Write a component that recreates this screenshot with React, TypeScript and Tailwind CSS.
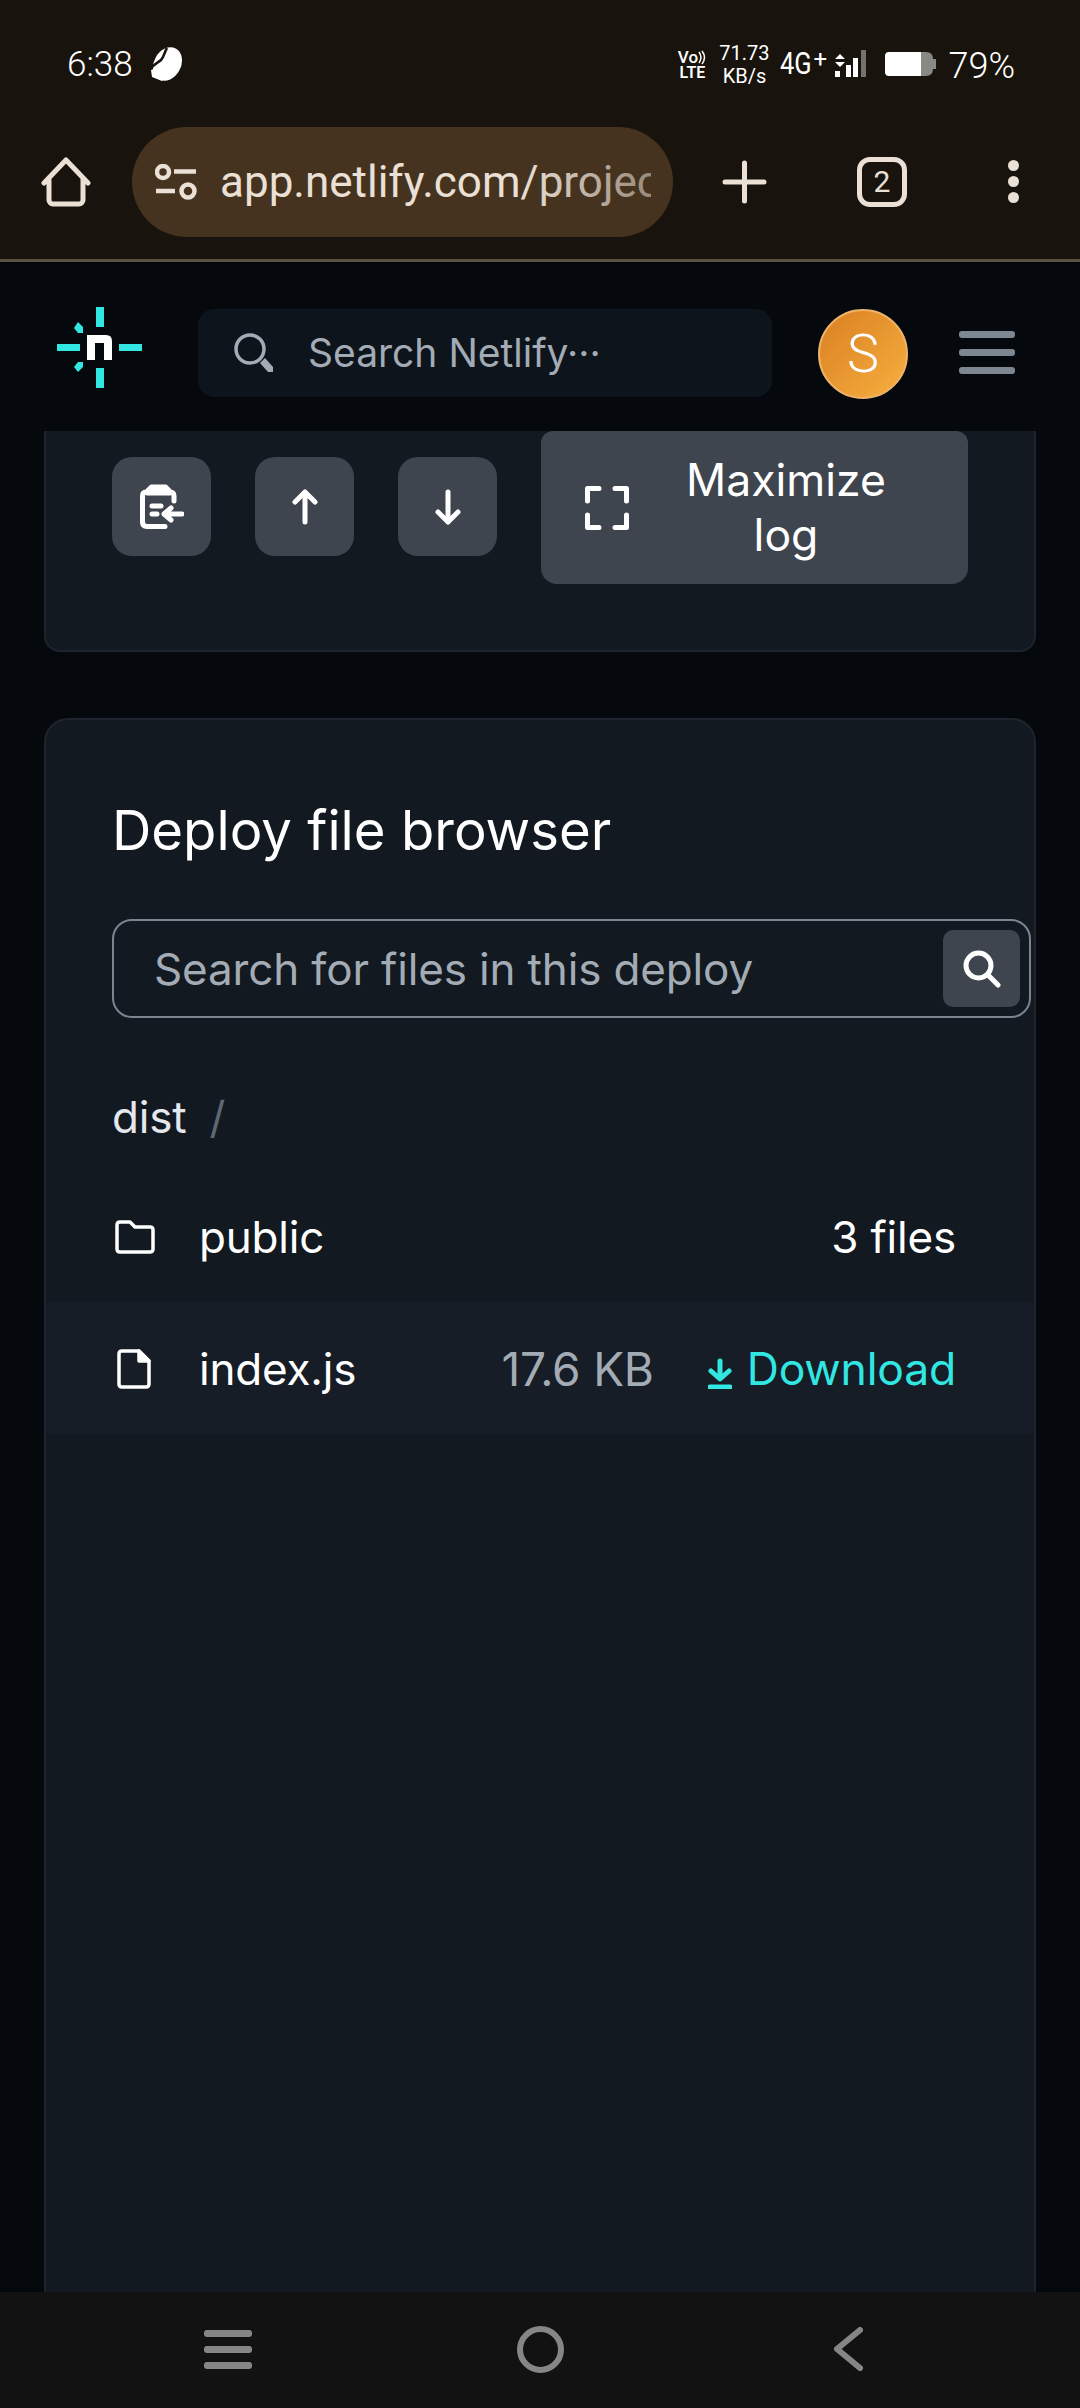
import React from "react";

const inter = { fontFamily: "Inter, 'Liberation Sans', sans-serif" };

function HomeIcon() {
  return (
    <svg width="50" height="50" viewBox="0 0 50 50" fill="none" stroke="#eae0d6" strokeWidth="5" strokeLinejoin="round" strokeLinecap="round">
      <path d="M3 26 L25 3 L47 26 M8 22 V43 a4 4 0 0 0 4 4 H38 a4 4 0 0 0 4 -4 V22" />
    </svg>
  );
}

function BeanIcon() {
  return (
    <svg width="34" height="34" viewBox="0 0 34 34" fill="none">
      <ellipse cx="17.5" cy="17" rx="13.5" ry="17.5" transform="rotate(28 17.5 17)" fill="#fff" />
      <path d="M17 1 C14 6 14 10 11 13 C8 16 3 17 0 23" stroke="#18130d" strokeWidth="2.5" />
      <path d="M10 6 C11 8 10 11 7 13 C5 14 3 16 2 18 Z" fill="#fff" />
      <path d="M1 23 C7 21 13 17 16 11 C17 9 18 6 19 4 L24 6 L12 34 L2 30 Z" fill="#fff" />
    </svg>
  );
}

function Logo() {
  return (
    <svg width="86" height="82" viewBox="0 0 86 82" className="shrink-0">
      <g fill="#32e6e2">
        <rect x="39" y="0" width="8" height="20" />
        <rect x="39" y="61" width="8" height="20" />
        <rect x="0" y="37" width="23" height="7" />
        <rect x="62" y="37" width="23" height="7" />
        <path d="M21 15 L26 20 V26 H21 L17 21 Z" />
        <path d="M21 66 L26 61 V56 H21 L17 61 Z" transform="translate(0 -1)" />
      </g>
      <path d="M30 53 V28 H49 Q55 28 55 34 V53 H47 V36 H38 V53 Z" fill="#fff" />
    </svg>
  );
}

function SearchNetlifyIcon() {
  return (
    <svg width="40" height="40" viewBox="0 0 40 40" fill="none" className="shrink-0">
      <circle cx="16" cy="16" r="14" stroke="#a3abb5" strokeWidth="3.5" />
      <path d="M26 30 L31 25 L39 34 V39 H34 Z" fill="#a3abb5" />
    </svg>
  );
}

function ClipboardIcon() {
  return (
    <svg width="44" height="45" viewBox="0 0 44 45" fill="none" stroke="#fff" strokeLinecap="round" strokeLinejoin="round">
      <path d="M11 2 H26 L30 6 V10 H7 V6 Z" fill="#fff" strokeWidth="3" />
      <path d="M6 8 Q2.5 8 2.5 12 V38 Q2.5 42.5 7 42.5 H25" strokeWidth="5" />
      <path d="M29 8 H30 Q34 8 34 12 V17" strokeWidth="5" />
      <path d="M12 22 H21 M12 30 H17" strokeWidth="5" />
      <path d="M24 30 H42 M31 24 L24 30 L31 36" strokeWidth="5" />
    </svg>
  );
}

function ArrowIcon({ down }: { down?: boolean }) {
  return (
    <svg width="26" height="36" viewBox="0 0 26 36" fill="none" stroke="#fff" strokeWidth="5" strokeLinecap="round" strokeLinejoin="round">
      {down ? <path d="M13 3 V33 M3 23 L13 33 L23 23" /> : <path d="M13 33 V3 M3 13 L13 3 L23 13" />}
    </svg>
  );
}

function ExpandIcon() {
  return (
    <svg width="44" height="44" viewBox="0 0 44 44" fill="none" stroke="#fff" strokeWidth="5" strokeLinecap="round" strokeLinejoin="round" className="shrink-0">
      <path d="M2.5 15 V2.5 H14 M30 2.5 H41.5 V15 M41.5 29 V41.5 H30 M14 41.5 H2.5 V29" />
    </svg>
  );
}

function ActionButton({ children }: { children: React.ReactNode }) {
  return <div className="w-[99px] h-[99px] rounded-[20px] bg-[#3e454e] flex items-center justify-center shrink-0">{children}</div>;
}

export default function App() {
  return (
    <div className="w-[1080px] h-[2408px] flex flex-col overflow-hidden bg-[#05090d]" style={inter}>
      {/* status bar */}
      <div className="h-[127px] shrink-0 bg-[#18130d] flex items-center justify-between pl-[67px] pr-[65px] text-white" style={{ fontFamily: "Roboto, sans-serif" }}>
        <div className="flex items-center gap-[17px]">
          <span className="text-[35px] leading-none font-light mt-[2px]">6:38</span>
          <BeanIcon />
        </div>
        <div className="flex items-center">
          <div className="w-[28px] flex flex-col items-center leading-none font-bold text-[15px] mr-[14px] mt-[2px]">
            <div className="flex items-center">
              <span className="text-[17px] leading-[15px] font-medium">Vo</span>
              <svg width="9" height="15" viewBox="0 0 9 15" fill="none" stroke="#fff" strokeWidth="1.5"><path d="M1 2 Q5 7.5 1 13 M4 1 Q9 7.5 4 14" /></svg>
            </div>
            <span className="text-[16px] leading-[14px] mt-[1px] font-semibold">LTE</span>
          </div>
          <div className="w-[48px] flex flex-col items-center text-[20px] leading-[23px] mr-[12px] mt-[2px]">
            <span>71.73</span>
            <span>KB/s</span>
          </div>
          <span className="text-[31px] leading-none scale-x-[0.82] origin-left w-[33px]">4G</span>
          <span className="text-[24px] leading-none -mt-[10px] w-[21px]">+</span>
          <svg width="33" height="28" viewBox="0 0 33 28" className="mr-[17px]">
            <path d="M1 9 L6 4 L11 9 Z M1 12 L11 12 L6 17 Z M1 21 H6 V27 H1 Z M12 15 H17 V27 H12 Z M19 8 H24 V27 H19 Z" fill="#fff" />
            <rect x="27" y="0" width="5" height="27" fill="#75716d" />
          </svg>
          <svg width="52" height="26" viewBox="0 0 52 26" className="mr-[12px]">
            <path d="M42 1 Q49 1 49 8 V18 Q49 25 42 25 H37 V1 Z" fill="#8a8885" />
            <rect x="49" y="8" width="3" height="10" fill="#8a8885" />
            <path d="M5 1 H37 V25 H5 Q1 25 1 21 V5 Q1 1 5 1 Z" fill="#fff" />
          </svg>
          <span className="text-[36px] leading-none font-light mt-[5px]">79%</span>
        </div>
      </div>

      {/* browser toolbar */}
      <div className="h-[132px] shrink-0 bg-[#18130d] flex items-start pl-[41px]">
        <div className="mt-[30px] mr-[41px]"><HomeIcon /></div>
        <div className="w-[541px] h-[110px] rounded-full bg-[#46331f] flex items-center pl-[23px] pr-[22px]">
          <svg width="42" height="36" viewBox="0 0 42 36" fill="none" stroke="#eae0d6" strokeWidth="4.5" className="shrink-0 mr-[23px]">
            <circle cx="8" cy="8" r="6" />
            <path d="M19 7.5 H41 M1 27 H20" />
            <circle cx="33" cy="27" r="6.5" />
          </svg>
          <div className="relative flex-1 min-w-0 overflow-hidden">
            <div className="text-[44px] leading-[60px] text-[#eae0d6] whitespace-nowrap" style={{ fontFamily: "Roboto, sans-serif" }}>app.netlify.com/projects/</div>
            <div className="absolute top-0 right-0 h-full w-[130px] bg-gradient-to-r from-[#46331f00] to-[#46331f80]" />
          </div>
        </div>
        <div className="mt-[33px] ml-[49px]">
          <svg width="45" height="44" viewBox="0 0 45 44" fill="none" stroke="#eae0d6" strokeWidth="5" strokeLinecap="round"><path d="M22.5 3 V41 M3 22 H42" /></svg>
        </div>
        <div className="mt-[30px] ml-[90px] w-[50px] h-[50px] rounded-[13px] border-[5px] border-[#eae0d6] flex items-center justify-center text-[30px] leading-none text-[#eae0d6]" style={{ fontFamily: "Roboto, sans-serif" }}>2</div>
        <div className="mt-[33px] ml-[101px] flex flex-col gap-[5px]">
          <div className="w-[11px] h-[11px] rounded-full bg-[#eae0d6]" />
          <div className="w-[11px] h-[11px] rounded-full bg-[#eae0d6]" />
          <div className="w-[11px] h-[11px] rounded-full bg-[#eae0d6]" />
        </div>
      </div>
      <div className="h-[3px] shrink-0 bg-[#5b5043]" />

      {/* Netlify header */}
      <div className="h-[169px] shrink-0 flex items-start pt-[47px] pl-[57px]">
        <div className="-mt-[2px]"><Logo /></div>
        <div className="ml-[55px] w-[574px] h-[88px] rounded-[16px] bg-[#0e141b] flex items-center pl-[36px]">
          <SearchNetlifyIcon />
          <span className="ml-[34px] -mt-[2px] text-[39px] leading-none text-[#a3abb5] whitespace-nowrap">Search Netlify···</span>
        </div>
        <div className="ml-[46px] w-[90px] h-[90px] rounded-full border-2 border-[#eeb268] bg-gradient-to-br from-[#da7f22] to-[#f6b03e] flex items-center justify-center text-white text-[54px] leading-none font-light" style={{ fontFamily: "Roboto, sans-serif" }}>S</div>
        <div className="ml-[51px] mt-[22px] flex flex-col gap-[11px]">
          <div className="w-[56px] h-[7px] rounded-[3px] bg-[#7d8791]" />
          <div className="w-[56px] h-[7px] rounded-[3px] bg-[#7d8791]" />
          <div className="w-[56px] h-[7px] rounded-[3px] bg-[#7d8791]" />
        </div>
      </div>

      {/* content */}
      <div className="flex-1 min-h-0 overflow-hidden px-[44px] flex flex-col">
        <div className="shrink-0 h-[221px] bg-[#121920] border-x-2 border-b-2 border-[#1d242d] rounded-b-[16px] pl-[66px] flex items-start gap-[44px]">
          <div className="mt-[26px]"><ActionButton><ClipboardIcon /></ActionButton></div>
          <div className="mt-[26px]"><ActionButton><ArrowIcon /></ActionButton></div>
          <div className="mt-[26px]"><ActionButton><ArrowIcon down /></ActionButton></div>
          <div className="w-[427px] h-[153px] rounded-b-[16px] rounded-t-[12px] bg-[#3e454e] flex items-center pl-[44px] shrink-0 text-white text-[44.5px] leading-[55px]">
            <ExpandIcon />
            <div className="ml-[27px] w-[260px] text-center">Maximize log</div>
          </div>
        </div>

        <div className="mt-[66px] flex-1 bg-[#121920] border-x-2 border-t-2 border-[#1d242d] rounded-t-[24px] flex flex-col">
          <div className="pl-[66px]">
            <h2 className="mt-[72px] text-[54.5px] leading-[76px] text-white font-normal">Deploy file browser</h2>
            <div className="mt-[51px] w-[919px] h-[99px] rounded-[20px] border-2 border-[#7b848f] flex items-center justify-between pl-[40px] pr-[9px]">
              <span className="text-[44px] leading-none text-[#a3abb5] tracking-[-0.15px]">Search for files in this deploy</span>
              <div className="w-[77px] h-[77px] rounded-[10px] bg-[#3e454e] flex items-center justify-center">
                <svg width="38" height="38" viewBox="0 0 38 38" fill="none" stroke="#fff" strokeWidth="5" strokeLinecap="round"><circle cx="15.5" cy="15.5" r="12.5" /><path d="M25 25 L35 35" /></svg>
              </div>
            </div>
            <div className="mt-[71px] flex items-center text-[44px] leading-[56px] tracking-[-0.2px]">
              <span className="text-[#e4e8ee]">dist</span>
              <span className="ml-[23px] text-[#5f6872]">/</span>
            </div>
          </div>

          <div className="mt-[27px] h-[130px] shrink-0 flex items-center pl-[69px] pr-[78px] text-[44px] text-white tracking-[-0.2px]">
            <svg width="40" height="34" viewBox="0 0 40 34" fill="none" stroke="#fff" strokeWidth="3.5" strokeLinejoin="round" className="shrink-0">
              <path d="M2 5 Q2 2 5 2 H15 L20 7 H35 Q38 7 38 10 V29 Q38 32 35 32 H5 Q2 32 2 29 Z" />
            </svg>
            <span className="ml-[44px] flex-1">public</span>
            <span>3 files</span>
          </div>

          <div className="h-[132px] shrink-0 bg-[#161d26] flex items-center pl-[71px] pr-[78px] pt-[2px] text-[44px] text-white tracking-[-0.2px]">
            <svg width="34" height="40" viewBox="0 0 34 40" fill="none" stroke="#fff" strokeWidth="3.5" strokeLinejoin="round" className="shrink-0">
              <path d="M2 5 Q2 2 5 2 H22 L32 12 V35 Q32 38 29 38 H5 Q2 38 2 35 Z" />
              <path d="M22 2 V12 H32 Z" fill="#fff" />
            </svg>
            <span className="ml-[48px] flex-1">index.js</span>
            <span className="text-[#a3abb5] text-[46px]">17.6 KB</span>
            <svg width="24" height="31" viewBox="0 0 24 31" fill="none" stroke="#32e6e2" strokeWidth="5" strokeLinecap="round" strokeLinejoin="round" className="ml-[54px] mt-[8px] shrink-0">
              <path d="M12 3 V20 M3 13 L12 21 L21 13 M2 29 H22" />
            </svg>
            <span className="ml-[15px] text-[#32e6e2] text-[44.5px]">Download</span>
          </div>
        </div>
      </div>

      {/* android nav bar */}
      <div className="h-[116px] shrink-0 bg-[#121212] flex items-center pl-[204px]">
        <div className="flex flex-col gap-[9px] mt-[-1px]">
          <div className="w-[48px] h-[7px] rounded-[3px] bg-[#868686]" />
          <div className="w-[48px] h-[7px] rounded-[3px] bg-[#868686]" />
          <div className="w-[48px] h-[7px] rounded-[3px] bg-[#868686]" />
        </div>
        <div className="ml-[265px] mt-[-2px] w-[47px] h-[47px] rounded-full border-[6px] border-[#868686]" />
        <svg width="30" height="44" viewBox="0 0 30 44" fill="none" stroke="#868686" strokeWidth="6" strokeLinecap="round" strokeLinejoin="round" className="ml-[269px] mt-[-2px]">
          <path d="M27 3 L4 22 L27 41" />
        </svg>
      </div>
    </div>
  );
}
